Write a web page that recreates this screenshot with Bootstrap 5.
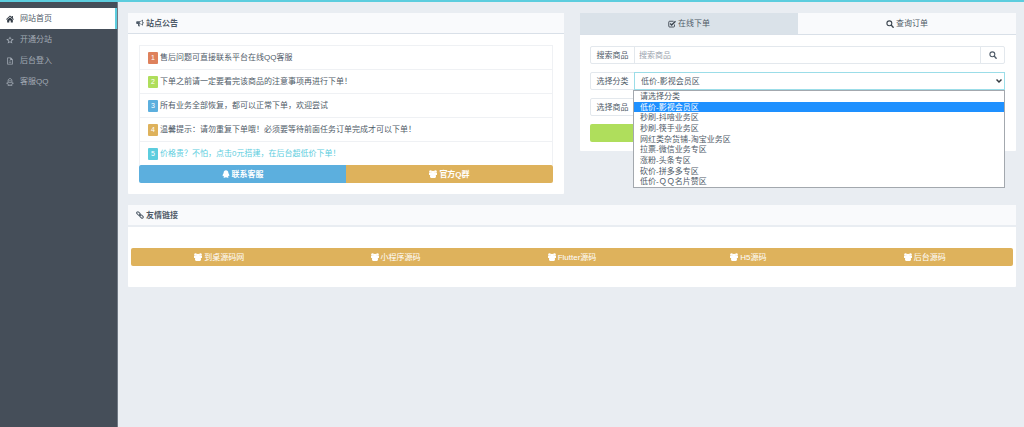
<!DOCTYPE html>
<html lang="zh-CN">
<head>
<meta charset="utf-8">
<meta name="viewport" content="width=device-width, initial-scale=1">
<title>网站首页</title>
<link href="https://cdn.jsdelivr.net/npm/bootstrap@5.3.0/dist/css/bootstrap.min.css" rel="stylesheet">
<style>
  :root {
    --ink: #4f5b68; --aqua: #5ccdde; --sky: #5cafde; --sand: #deb25c;
    --lime: #afde5c; --coral: #de815c; --line: #e3e8ed; --page: #e9edf2;
  }
  body { font-family: "Liberation Sans", "Noto Sans CJK SC", sans-serif; font-size: 8px; line-height: 13px; color: var(--ink); background: var(--page); border-top: 2px solid var(--aqua); }
  .ico { width: 8px; height: 8px; fill: currentColor; flex: none; }
  .side { width: 118px; background: #454e59; padding-top: 6px; border-right: 1px solid #717a85; }
  .side a { height: 21px; padding: 0 6px; gap: 6px; color: #a3abb5; text-decoration: none; }
  .side a.active { background: #fff; color: var(--ink); border-right: 2px solid var(--aqua); }
  .side a.active .ico { color: #333c46; }
  .main-area { padding: 11px 8px 11px 10px; }
  .columns { --bs-gutter-x: 16px; --bs-gutter-y: 0; }
  .panel { background: #fff; border: 0; border-radius: 1px; }
  .panel-title { height: 21px; padding: 0 8px; gap: 2px; font-size: 8px; font-weight: 700; line-height: 13px; background: #f9fafc; border-bottom: 1px solid #d9e0e8; }
  .panel-body { padding: 11px; }
  .notice { border-radius: 0; }
  .notice .list-group-item { height: 24px; padding: 0 8px; gap: 2px; color: var(--ink); border-color: #eff1f4; border-bottom: 0; }
  .notice .list-group-item + .list-group-item { border-top-width: 1px; }
  .notice a { color: var(--aqua); }
  .num { width: 10px; height: 12px; padding: 0; font-size: 7px; line-height: 12px; font-weight: 400; border-radius: 1px; color: #fff; }
  .strip .btn, .send { height: 18px; padding: 0; font-size: 8px; line-height: 13px; border: 0; border-radius: 0; color: #fff; }
  .strip .btn { gap: 2px; }
  .strip { border-radius: 2px; overflow: hidden; }
  .bg-sky { background: var(--sky); } .bg-sand { background: var(--sand); }
  .bg-coral { background: var(--coral); } .bg-lime { background: var(--lime); } .bg-aqua { background: var(--aqua); }
  .tabs .nav-link { height: 22px; padding: 0; gap: 2px; color: var(--ink); background: #f9fafc; border: 0; border-radius: 0; border-bottom: 1px solid #d9e0e8; }
  .tabs .nav-link.active { color: var(--ink); background: #dae2e9; }
  .tabs .ico { color: #3b444e; }
  .order { padding: 11px 11px 9px 10px; gap: 8px; }
  .order .input-group-text, .order .form-control, .order .form-select, .order .btn-find { height: 18px; min-height: 18px; font-size: 8px; line-height: 13px; padding: 0 4px; border-color: var(--line); border-radius: 2px; color: var(--ink); background-color: #fff; }
  .order .input-group-text { width: 45px; padding: 0; justify-content: center; }
  .order .form-control::placeholder { color: #9aa3ad; }
  .order .form-select { padding: 0 6px; background-size: 6px 6px; background-position: right 2px center; background-image: url("data:image/svg+xml,%3csvg xmlns='http://www.w3.org/2000/svg' viewBox='0 0 12 12'%3e%3cpath fill='none' stroke='%23343a40' stroke-width='3' d='M1 3l5 5 5-5'/%3e%3c/svg%3e"); }
  .order .form-select.opened { border-color: #9bdde8; }
  .order .btn-find { width: 25px; }
  .order .input-group > :first-child { border-top-right-radius: 0; border-bottom-right-radius: 0; }
  .order .input-group > :last-child:not(:first-child) { border-top-left-radius: 0; border-bottom-left-radius: 0; }
  .order .send { border-radius: 2px; background: var(--lime); }
  .choices { top: 18px; left: 44px; right: 0; height: 98px; z-index: 10; background: #fff; border: 1px solid #a3a8ae; }
  .choices li { flex: 1 1 0; min-height: 0; padding: 0 6px; line-height: 12px; }
  .choices .picked { background: #1e90ff; color: #fff; }
  .links-panel { margin-top: 11px; }
  .links-panel .panel-title { border-bottom: 2px solid var(--page); height: 22px; }
  .links-body { padding: 21px 3px; }
</style>
</head>
<body>
<svg class="d-none" aria-hidden="true">
  <symbol id="i-home" viewBox="0 0 16 16"><path d="M8 1 0 8.300l1.200 1.300L8 3.600l6.800 6 1.200-1.300-2.200-2V2h-2.300v2.200zM8 5 2.300 9.700V15h4.200v-4h3v4h4.200V9.700z"/></symbol>
  <symbol id="i-star" viewBox="0 0 16 16"><path fill-rule="evenodd" d="m8 .8 2.300 4.700 5.200.8-3.800 3.600.9 5.200L8 12.700l-4.600 2.400.9-5.200L.5 6.300l5.200-.8zM8 4 6.700 6.700l-2.900.4 2.100 2-.5 2.900L8 10.600l2.600 1.400-.5-2.900 2.100-2-2.900-.4z"/></symbol>
  <symbol id="i-file" viewBox="0 0 16 16"><path fill-rule="evenodd" d="M2.500 1H10l3.500 3.500V15h-11zM4 2.500v11h8V6H8.500V2.500zM5.500 7.500h5v1h-5zm0 2.500h5v1h-5z"/></symbol>
  <symbol id="i-qq" viewBox="0 0 16 16"><path d="M8 .5c-3 0-4.700 2.100-4.700 5 0 1-.3 1.300-.8 2.200C1.600 9.300 1 11 1.400 12.200c.3.700 1-.1 1.400-.8.200.8.600 1.500 1.200 2-1.400.4-1.300 2.100.6 2.100 1.300 0 2.700-.2 3.400-.8.700.6 2.100.8 3.400.8 1.900 0 2-1.700.6-2.100.6-.5 1-1.200 1.200-2 .4.700 1.100 1.500 1.400.8.400-1.200-.2-2.900-1.100-4.500-.5-.9-.8-1.200-.8-2.200 0-2.900-1.700-5-4.700-5z"/></symbol>
  <symbol id="i-qq-line" viewBox="0 0 16 16"><path fill="none" stroke="currentColor" stroke-width="1.700" d="M4.200 7V5.300C4.200 3 5.700 1.300 8 1.300s3.800 1.700 3.800 4V7c1.600 1.600 2.600 3.400 2.300 5l-1.800-.8c-.2 1-.7 1.700-1.300 2.200l1 1.300H8.500v-1h-1v1H4l1-1.300c-.6-.5-1.100-1.200-1.300-2.200L1.900 12c-.3-1.600.7-3.400 2.300-5zM4 8.500h8M6.500 4v1.500M9.500 4v1.500"/></symbol>
  <symbol id="i-horn" viewBox="0 0 16 16"><path fill-rule="evenodd" d="M14 1v4.800a1.500 1.500 0 0 1 0 3V13.500c-2-1.800-4.200-3-6.600-3.300-.9.400-.9 1.400-.2 2-.5.700.1 1.400.9 2-.8 1.200-3.200 1-3.700-.1-.4-1.300-.7-2.600-.3-4H2A1.600 1.600 0 0 1 .4 8.500V6A1.600 1.600 0 0 1 2 4.400h4.500C9.200 4.400 11.700 3 14 1zm-1.400 2.500C11 4.700 9.300 5.400 7.600 5.600v3.300c1.700.2 3.400.9 5 2.100z"/></symbol>
  <symbol id="i-users" viewBox="0 0 16 16"><circle cx="3.100" cy="3" r="2.700"/><circle cx="12.900" cy="3" r="2.700"/><circle cx="8" cy="5" r="3.300"/><path d="M0 9V6.500C0 5.300.8 5 1.600 5.200h12.800c.8-.2 1.600.1 1.600 1.300V9c0 .7-.5 1.200-1.500 1.200h-13C.5 10.200 0 9.700 0 9zM2 13.200C2 10.600 2.500 8 4.800 8h6.400c2.300 0 2.800 2.600 2.800 5.200 0 1.700-.9 2.600-2.500 2.600h-7C2.900 15.800 2 14.900 2 13.200z"/></symbol>
  <symbol id="i-check" viewBox="0 0 16 16"><path fill="none" stroke="currentColor" stroke-width="1.800" d="M13 9v3.200a1.800 1.800 0 0 1-1.800 1.800H3.300a1.800 1.800 0 0 1-1.800-1.800V4.300a1.800 1.800 0 0 1 1.800-1.800h7.900"/><path fill="none" stroke="currentColor" stroke-width="2.600" d="m4.300 7 3 3L15 2.500"/></symbol>
  <symbol id="i-search" viewBox="0 0 16 16"><circle cx="6.700" cy="6.700" r="4.900" fill="none" stroke="currentColor" stroke-width="2.200"/><path fill="none" stroke="currentColor" stroke-width="2.800" stroke-linecap="round" d="m10.700 10.700 3.600 3.600"/></symbol>
  <symbol id="i-link" viewBox="0 0 16 16"><g fill="none" stroke="currentColor" stroke-width="2"><rect x="1" y="2.800" width="8" height="4.600" rx="2.200" transform="rotate(45 5 5)"/><rect x="7" y="8.700" width="8" height="4.600" rx="2.200" transform="rotate(45 11 11)"/><path d="m6.500 6.500 3 3"/></g></symbol>
</svg>

<div class="d-flex min-vh-100">
  <nav class="side flex-shrink-0 d-flex flex-column" aria-label="主菜单">
    <a class="active d-flex align-items-center" href="#"><svg class="ico"><use href="#i-home"/></svg>网站首页</a>
    <a class="d-flex align-items-center" href="#"><svg class="ico"><use href="#i-star"/></svg>开通分站</a>
    <a class="d-flex align-items-center" href="#"><svg class="ico"><use href="#i-file"/></svg>后台登入</a>
    <a class="d-flex align-items-center" href="#"><svg class="ico"><use href="#i-qq-line"/></svg>客服QQ</a>
  </nav>

  <main class="main-area flex-grow-1">
    <div class="row columns align-items-start">
      <div class="col-6">
        <section class="card panel">
          <h2 class="panel-title d-flex align-items-center mb-0"><svg class="ico"><use href="#i-horn"/></svg>站点公告</h2>
          <div class="panel-body">
            <ul class="list-group notice">
              <li class="list-group-item d-flex align-items-center"><span class="badge num bg-coral">1</span>售后问题可直接联系平台在线QQ客服</li>
              <li class="list-group-item d-flex align-items-center"><span class="badge num bg-lime">2</span>下单之前请一定要看完该商品的注意事项再进行下单！</li>
              <li class="list-group-item d-flex align-items-center"><span class="badge num bg-sky">3</span>所有业务全部恢复，都可以正常下单，欢迎尝试</li>
              <li class="list-group-item d-flex align-items-center"><span class="badge num bg-sand">4</span>温馨提示：请勿重复下单哦！必须要等待前面任务订单完成才可以下单！</li>
              <li class="list-group-item d-flex align-items-center"><span class="badge num bg-aqua">5</span><a class="text-decoration-none" href="#">价格贵？不怕，点击0元搭建，在后台超低价下单！</a></li>
            </ul>
            <div class="strip d-flex">
              <a class="btn bg-sky flex-fill w-50 fw-bold d-flex align-items-center justify-content-center" href="#"><svg class="ico"><use href="#i-qq"/></svg>联系客服</a>
              <a class="btn bg-sand flex-fill w-50 fw-bold d-flex align-items-center justify-content-center" href="#"><svg class="ico"><use href="#i-users"/></svg>官方Q群</a>
            </div>
          </div>
        </section>
      </div>

      <div class="col-6">
        <section class="card panel">
          <div class="nav nav-fill tabs" role="tablist">
            <button class="nav-link active nav-item d-flex align-items-center justify-content-center" type="button" role="tab" aria-selected="true"><svg class="ico"><use href="#i-check"/></svg>在线下单</button>
            <button class="nav-link nav-item d-flex align-items-center justify-content-center" type="button" role="tab" aria-selected="false"><svg class="ico"><use href="#i-search"/></svg>查询订单</button>
          </div>
          <form class="order d-flex flex-column">
            <div class="input-group">
              <label class="input-group-text" for="find">搜索商品</label>
              <input class="form-control" id="find" type="text" placeholder="搜索商品">
              <button class="btn btn-find d-flex align-items-center justify-content-center" type="button" aria-label="搜索"><svg class="ico"><use href="#i-search"/></svg></button>
            </div>
            <div class="input-group position-relative">
              <label class="input-group-text" for="kind">选择分类</label>
              <select class="form-select opened" id="kind"><option>低价-影视会员区</option></select>
              <ul class="choices position-absolute list-unstyled mb-0 d-flex flex-column" role="listbox" aria-label="选择分类">
                <li role="option">请选择分类</li>
                <li role="option" class="picked" aria-selected="true">低价-影视会员区</li>
                <li role="option">秒刷-抖喑业务区</li>
                <li role="option">秒刷-筷手业务区</li>
                <li role="option">网红类杂货铺-淘宝业务区</li>
                <li role="option">拉票-微信业务专区</li>
                <li role="option">涨粉-头条专区</li>
                <li role="option">砍价-拼多多专区</li>
                <li role="option">低价-ＱＱ名片赞区</li>
              </ul>
            </div>
            <div class="input-group">
              <label class="input-group-text" for="goods">选择商品</label>
              <select class="form-select" id="goods"></select>
            </div>
            <button class="btn send w-100" type="submit" aria-label="提交"></button>
          </form>
        </section>
      </div>
    </div>

    <section class="card panel links-panel">
      <h2 class="panel-title d-flex align-items-center mb-0"><svg class="ico"><use href="#i-link"/></svg>友情链接</h2>
      <div class="links-body">
        <div class="strip row row-cols-5 g-0">
          <a class="btn bg-sand d-flex align-items-center justify-content-center" href="#"><svg class="ico"><use href="#i-users"/></svg>到桌源码网</a>
          <a class="btn bg-sand d-flex align-items-center justify-content-center" href="#"><svg class="ico"><use href="#i-users"/></svg>小程序源码</a>
          <a class="btn bg-sand d-flex align-items-center justify-content-center" href="#"><svg class="ico"><use href="#i-users"/></svg>Flutter源码</a>
          <a class="btn bg-sand d-flex align-items-center justify-content-center" href="#"><svg class="ico"><use href="#i-users"/></svg>H5源码</a>
          <a class="btn bg-sand d-flex align-items-center justify-content-center" href="#"><svg class="ico"><use href="#i-users"/></svg>后台源码</a>
        </div>
      </div>
    </section>
  </main>
</div>
<script src="https://cdn.jsdelivr.net/npm/bootstrap@5.3.0/dist/js/bootstrap.bundle.min.js"></script>
</body>
</html>
